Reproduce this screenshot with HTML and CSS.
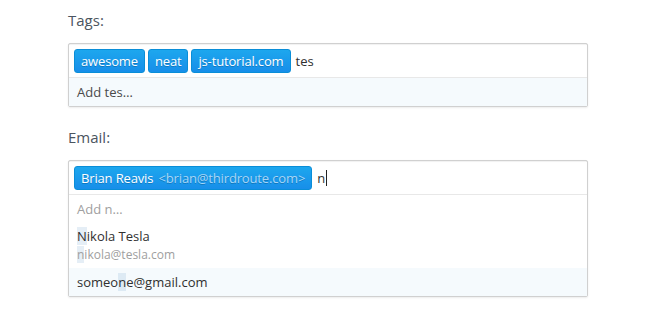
FILE: index.html
```html
<!DOCTYPE html>
<html>
<head>
<meta charset="utf-8">
<link rel="stylesheet" href="styles.css">
</head>
<body>
<div class="page">
  <section class="field">
    <div class="label">Tags:</div>
    <div class="box">
      <div class="control">
        <span class="item">awesome</span>
        <span class="item">neat</span>
        <span class="item">js-tutorial.com</span>
        <span class="input">tes</span>
      </div>
      <div class="dropdown">
        <div class="opt create active">Add <span class="kw">tes</span>…</div>
      </div>
    </div>
  </section>
  <section class="field">
    <div class="label">Email:</div>
    <div class="box">
      <div class="control">
        <span class="item">Brian Reavis <span class="email">&lt;brian@thirdroute.com&gt;</span></span>
        <span class="input">n<span class="caret"></span></span>
      </div>
      <div class="dropdown">
        <div class="opt create muted">Add n…</div>
        <div class="opt two">
          <div class="name"><span class="hl">N</span>ikola Tesla</div>
          <div class="sub"><span class="hl">n</span>ikola@tesla.com</div>
        </div>
        <div class="opt active">someo<span class="hl">n</span>e@gmail.com</div>
      </div>
    </div>
  </section>
</div>
</body>
</html>
```
FILE: styles.css
```css
html, body {
  margin: 0;
  padding: 0;
  background: #fff;
}
body {
  font-family: "Open Sans", "Segoe UI", sans-serif;
  color: #303030;
  width: 660px;
  height: 330px;
  overflow: hidden;
}
.page {
  padding: 10px 0 0 68px;
  width: 520px;
}
.field {
  margin-bottom: 20px;
}
.label {
  font-size: 15px;
  line-height: 20px;
  color: #4b5560;
  margin-bottom: 13px;
}
.box {
  border: 1px solid #d0d0d0;
  border-radius: 2px;
  box-shadow: 0 1px 2px rgba(0,0,0,0.08);
  background: #fff;
}
.control {
  display: flex;
  align-items: center;
  gap: 3px;
  padding: 5px 5px 4px 5px;
  box-shadow: inset 0 1px 1px rgba(0,0,0,0.06);
}
.item {
  display: inline-block;
  font-size: 13px;
  letter-spacing: -0.15px;
  line-height: 22px;
  height: 22px;
  padding: 0 6px;
  color: #fff;
  background: linear-gradient(to bottom, #1da7ee, #178ee9);
  border: 1px solid #0a8ed8;
  border-radius: 3px;
  text-shadow: 0 1px 0 rgba(0,51,83,0.3);
}
.email {
  color: #a6d6f6;
  margin-left: 2px;
}
.input {
  font-size: 13px;
  color: #303030;
  margin-left: 2px;
  display: inline-flex;
  align-items: center;
}
.caret {
  display: inline-block;
  width: 1px;
  height: 16px;
  background: #222;
  margin-left: 1px;
}
.dropdown {
  border-top: 1px solid #e8e8e8;
}
.opt {
  font-size: 13px;
  line-height: 18px;
  padding: 5px 8px;
  color: #303030;
}
.opt.active {
  background: #f5fafd;
}
.create {
  color: #4a4a4a;
}
.muted {
  color: #a0a0a0;
  padding-top: 5px;
  padding-bottom: 6px;
}
.two {
  padding-top: 3px;
  padding-bottom: 5px;
}
.name {
  line-height: 19px;
}
.sub {
  font-size: 12px;
  line-height: 17px;
  color: #a0a0a0;
}
.hl {
  background: rgba(125,168,208,0.2);
}
```
